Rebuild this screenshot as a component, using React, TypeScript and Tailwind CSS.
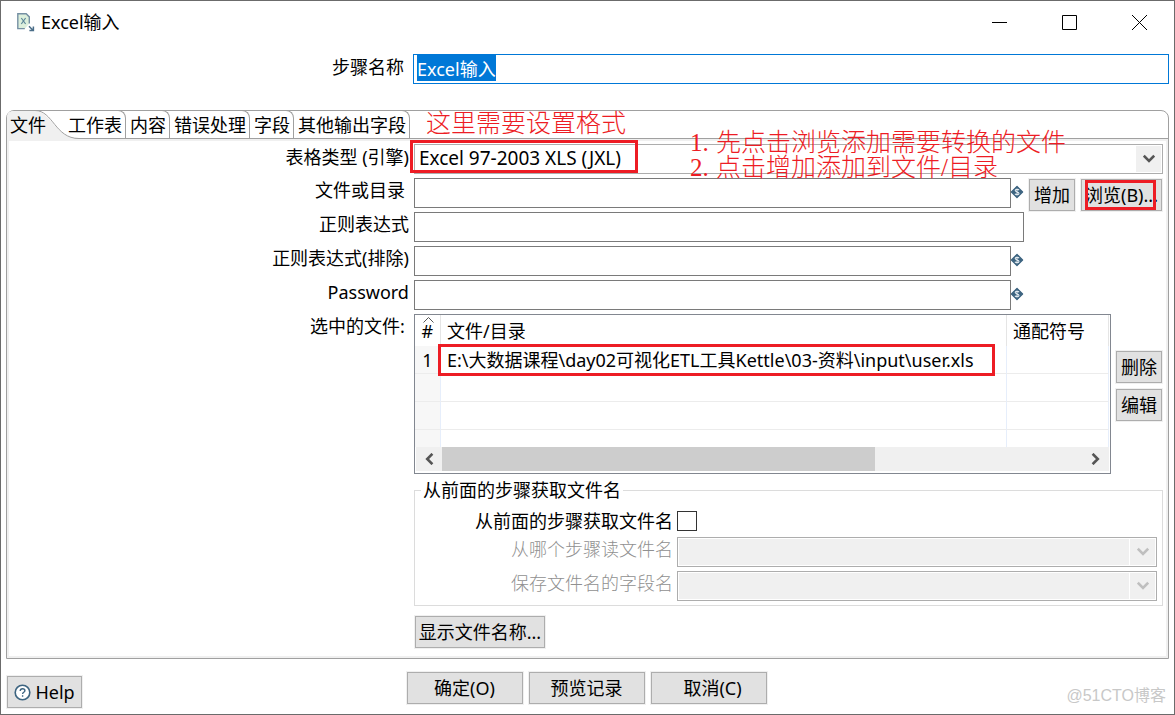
import React, { useEffect, useRef, useState } from 'react';

interface FormRowProps {
  id: string;
  label: string;
  labelClass?: string;
  children: React.ReactNode;
}

interface ButtonProps {
  className?: string;
  children: React.ReactNode;
}

const tabs = ['工作表', '内容', '错误处理', '字段', '其他输出字段'];

const files = [
  { path: 'E:\\大数据课程\\day02可视化ETL工具Kettle\\03-资料\\input\\user.xls', wildcard: '' },
];

function Button({ className = '', children }: ButtonProps) {
  return (
    <button className={`h-8 shrink-0 whitespace-nowrap border border-[#adadad] bg-[#e1e1e1] leading-6 ring-1 ring-[#f0f0f0] ${className}`}>
      {children}
    </button>
  );
}

function FormRow({ id, label, labelClass = 'pr-[5px]', children }: FormRowProps) {
  return (
    <div className="mb-1 flex items-start">
      <label htmlFor={id} className={`w-[35%] shrink-0 text-right ${labelClass}`}>{label}</label>
      {children}
    </div>
  );
}

function TextInput({ id }: { id: string }) {
  return <input id={id} type="text" className="h-[30px] min-w-0 flex-1 border border-[#7a7a7a] bg-white px-1 outline-none" />;
}

function Chevron({ color }: { color: string }) {
  return (
    <svg width="12" height="10" viewBox="0 0 12 10" fill="none" stroke={color} strokeWidth="2.6">
      <path d="M0.8 1.6 6 6.8 11.2 1.6" />
    </svg>
  );
}

function VariableIcon() {
  return (
    <svg width="13" height="14" viewBox="0 0 13 14" className="mt-[7px] shrink-0">
      <path d="M6 1.3 11.6 7 6 12.7 0.4 7Z" fill="#3d6480" stroke="#3d6480" strokeLinejoin="round" strokeWidth="1.2" />
      <path d="M8 5.2C7.5 4 4.2 3.9 4.2 5.6 4.2 7.3 8 6.6 8 8.4 8 10.1 4.6 10 4 8.7M6 3.4V10.6" fill="none" stroke="#e3ebf0" strokeWidth="1.1" />
    </svg>
  );
}

function DisabledSelect({ id, label }: { id: string; label: string }) {
  return (
    <div className="mb-1 flex items-start">
      <label htmlFor={id} className="w-[262px] shrink-0 pr-1 text-right font-light text-[#909090]">{label}</label>
      <div className="relative flex flex-1">
        <select id={id} disabled className="h-[30px] w-full appearance-none border border-[#adadad] bg-[#f0f0f0] opacity-100 ring-1 ring-inset ring-white" />
        <span className="pointer-events-none absolute inset-y-0.5 right-0.5 flex w-[26px] items-center justify-center border-l border-white">
          <Chevron color="#bfbfbf" />
        </span>
      </div>
    </div>
  );
}

export default function App() {
  const [fromStep, setFromStep] = useState(false);
  const nameRef = useRef<HTMLInputElement>(null);

  useEffect(() => {
    nameRef.current?.focus();
    nameRef.current?.select();
  }, []);

  return (
    <div className="relative min-h-screen border border-[#6b6b6b] bg-white font-['Noto_Sans','Noto_Sans_CJK_SC',sans-serif] text-[18px] leading-6 text-black">
      {/* title bar */}
      <header className="flex h-[43px] items-center">
        <svg width="18" height="19" viewBox="0 0 18 19" className="ml-4 mr-1.5" fill="none">
          <path d="M0.8 0.8H9.5L12.3 3.6V10.5L8 15.6H0.8Z" fill="#dcefdc" />
          <path d="M7.8 15.6H0.8V0.8H9.2L12.3 3.9V10.5" stroke="#7590a3" strokeWidth="1.4" />
          <path d="M4.3 5 8.6 11M8.6 5 4.3 11" stroke="#5c8799" strokeWidth="1.2" />
          <path d="M12 13.2 16 17.2M16.4 13.6V17.6H12.4" stroke="#4a6d88" strokeWidth="1.5" />
        </svg>
        <h1 className="flex-1 pb-0.5">Excel输入</h1>
        <button aria-label="最小化" className="flex h-full w-[70px] items-center justify-center">
          <svg width="15" height="15" stroke="#000"><path d="M0 7.5H15" /></svg>
        </button>
        <button aria-label="最大化" className="flex h-full w-[70px] items-center justify-center">
          <svg width="15" height="15" stroke="#000" fill="none"><path d="M0.5 0.5H14.5V14.5H0.5Z" /></svg>
        </button>
        <button aria-label="关闭" className="flex h-full w-[70px] items-center justify-center">
          <svg width="15" height="15" stroke="#000"><path d="M0 0 15 15M15 0 0 15" /></svg>
        </button>
      </header>

      <div className="mt-2.5 flex items-start px-[5px]">
        <label htmlFor="step-name" className="w-[35%] pr-[9px] pt-px text-right">步骤名称</label>
        <input
          id="step-name"
          ref={nameRef}
          type="text"
          defaultValue="Excel输入"
          className="h-[30px] min-w-0 flex-1 border border-[#0078d7] px-[3px] pb-0.5 leading-6 outline-none selection:bg-[#0078d7] selection:text-white"
        />
      </div>

      <main className="mx-[5px] mt-[26px] rounded-t-lg border border-[#a0a0a0]">
        {/* tab strip */}
        <div role="tablist" className="relative flex h-7 border-b border-[#a0a0a0]">
          <button role="tab" aria-selected="true" className="relative w-[57px] pl-[3px] text-left">
            <svg width="72" height="28" viewBox="0 0 72 28" className="absolute left-0 top-0" fill="none">
              <path d="M0 28V6Q0 0 6 0H28C44 0 48 27.5 72 27.5V28Z" fill="#f0f0f0" />
              <path d="M28 -0.5C46 -0.5 48 27.5 72 27.5" stroke="#a0a0a0" />
            </svg>
            <span className="relative">文件</span>
          </button>
          {tabs.map(tab => (
            <button key={tab} role="tab" aria-selected="false" className="relative -mt-px whitespace-nowrap rounded-tr-lg border-r border-t border-[#a0a0a0] pl-1 pr-[3px]">
              {tab}
            </button>
          ))}
          <p className="pointer-events-none ml-4 whitespace-nowrap pt-px font-['Liberation_Serif','Noto_Sans_CJK_SC',serif] text-[25px] font-light text-[#ed1c24]">
            这里需要设置格式
          </p>
        </div>

        <div className="border-2 border-[#f0f0f0] pb-2 pt-[3px]">
          <FormRow id="engine" label="表格类型 (引擎)" labelClass="pr-[5px] pt-px">
            <div className="relative mr-[3px] flex flex-1">
              <select id="engine" className="h-[30px] w-full appearance-none border border-[#adadad] bg-white pb-0.5 pl-1 text-[19px] outline-none">
                <option>Excel 97-2003 XLS (JXL)</option>
              </select>
              <span className="pointer-events-none absolute inset-y-0.5 right-0.5 flex w-[25px] items-center justify-center bg-[#f0f0f0]">
                <Chevron color="#555" />
              </span>
              <span className="pointer-events-none absolute -left-1 -top-1 h-[33px] w-[228px] border-[3px] border-[#ed1c24]" />
              <ol className="pointer-events-none absolute -top-3.5 left-[276px] whitespace-nowrap font-['Liberation_Serif','Noto_Sans_CJK_SC',serif] text-[25px] font-light leading-[25px] text-[#ed1c24]">
                <li className="flex"><span className="w-[26px]">1.</span>先点击浏览添加需要转换的文件</li>
                <li className="flex"><span className="w-[26px]">2.</span>点击增加添加到文件/目录</li>
              </ol>
            </div>
          </FormRow>

          <FormRow id="file" label="文件或目录" labelClass="pr-[9px]">
            <div className="mr-1 flex h-[30px] flex-1 items-start">
              <TextInput id="file" />
              <VariableIcon />
              <div className="ml-[5px] mt-px flex gap-1.5">
                <Button className="px-1">增加</Button>
                <div className="relative">
                  <Button className="w-[81px] overflow-hidden">浏览(B)...</Button>
                  <span className="pointer-events-none absolute left-1 top-px h-[30px] w-[71px] border-[3px] border-[#ed1c24]" />
                </div>
              </div>
            </div>
          </FormRow>

          <FormRow id="regex" label="正则表达式">
            <div className="mr-[142px] flex flex-1">
              <TextInput id="regex" />
            </div>
          </FormRow>

          <FormRow id="exclude" label="正则表达式(排除)">
            <div className="mr-[142px] flex flex-1">
              <TextInput id="exclude" />
              <VariableIcon />
            </div>
          </FormRow>

          <FormRow id="password" label="Password">
            <div className="mr-[142px] flex flex-1">
              <TextInput id="password" />
              <VariableIcon />
            </div>
          </FormRow>

          <FormRow id="files" label="选中的文件:" labelClass="pr-[9px]">
            <div className="mr-1 flex flex-1 gap-[5px]">
              <div className="flex-1 border border-[#828790] pb-0.5 pr-px">
                <table id="files" className="w-full table-fixed border-separate border-spacing-0 text-left">
                  <thead>
                    <tr className="h-[31px]">
                      <th className="relative w-[26px] border-r border-[#e5e5e5] text-center font-normal">
                        <svg width="11" height="6" viewBox="0 0 11 6" className="absolute left-2 top-0.5" fill="none" stroke="#555">
                          <path d="M0.5 5.5 5.5 0.5 10.5 5.5" />
                        </svg>
                        #
                      </th>
                      <th className="border-r border-[#e5e5e5] pl-1.5 font-normal">文件/目录</th>
                      <th className="w-[102px] border-r border-[#e5e5e5] pl-1.5 font-normal">通配符号</th>
                    </tr>
                  </thead>
                  <tbody>
                    {files.map((file, i) => (
                      <tr key={file.path} className="h-7">
                        <td className="border-b border-r border-[#ececec] bg-[#f7f7f7] text-center">{i + 1}</td>
                        <td className="relative whitespace-nowrap border-b border-r border-b-[#ececec] border-r-[#e6eefb] pl-1.5">
                          {file.path}
                          <span className="pointer-events-none absolute -left-[3px] -top-0.5 h-8 w-[557px] border-[3px] border-[#ed1c24]" />
                        </td>
                        <td className="border-b border-r border-b-[#ececec] border-r-[#e6eefb]">{file.wildcard}</td>
                      </tr>
                    ))}
                    {[0, 1].map(n => (
                      <tr key={n} className="h-7">
                        <td className="border-b border-r border-b-[#ececec] border-r-[#e6eefb] bg-[#f7f7f7]" />
                        <td className="border-b border-r border-b-[#ececec] border-r-[#e6eefb]" />
                        <td className="border-b border-r border-b-[#ececec] border-r-[#e6eefb]" />
                      </tr>
                    ))}
                    <tr className="h-[17px]">
                      <td className="border-r border-[#e6eefb] bg-[#f7f7f7]" />
                      <td className="border-r border-[#e6eefb]" />
                      <td className="border-r border-[#e6eefb]" />
                    </tr>
                  </tbody>
                </table>
                {/* horizontal scrollbar */}
                <div className="ml-px flex h-6 items-center bg-[#f0f0f0]">
                  <button aria-label="向左滚动" className="flex h-full w-[26px] items-center justify-center">
                    <span className="rotate-90"><Chevron color="#555" /></span>
                  </button>
                  <div className="h-full flex-1">
                    <div className="h-full w-[67.5%] bg-[#cdcdcd]" />
                  </div>
                  <button aria-label="向右滚动" className="flex h-full w-[26px] items-center justify-center">
                    <span className="-rotate-90"><Chevron color="#555" /></span>
                  </button>
                </div>
              </div>
              <div className="mt-[37px] flex flex-col gap-1.5">
                <Button className="px-1">删除</Button>
                <Button className="px-1">编辑</Button>
              </div>
            </div>
          </FormRow>

          <div className="ml-[35%] mr-[3px]">
            <fieldset className="border border-[#dcdcdc]">
              <legend className="ml-1.5 px-0.5">从前面的步骤获取文件名</legend>
              <div className="mb-[5px] mt-2 flex h-[22px] items-center">
                <label htmlFor="from-step" className="w-[262px] pr-1 text-right">从前面的步骤获取文件名</label>
                <input
                  id="from-step"
                  type="checkbox"
                  checked={fromStep}
                  onChange={e => setFromStep(e.target.checked)}
                  className="size-5 appearance-none border border-[#333] bg-white checked:bg-[#0078d7]"
                />
              </div>
              <div className="pr-[5px]">
                <DisabledSelect id="source-step" label="从哪个步骤读文件名" />
                <DisabledSelect id="name-field" label="保存文件名的字段名" />
              </div>
            </fieldset>
            <Button className="ml-px mt-2.5 w-[130px]">显示文件名称...</Button>
          </div>
        </div>
      </main>

      <footer className="mt-[13px] grid grid-cols-[1fr_auto_1fr] items-start pb-1.5 pl-1.5 pr-2">
        <div className="pt-1">
          <Button className="flex w-[75px] items-center justify-center gap-1">
            <svg width="17" height="17" viewBox="0 0 17 17" fill="none" stroke="#3d6480">
              <circle cx="8.5" cy="8.5" r="7.3" strokeWidth="1.6" fill="#fff" />
              <path d="M6.2 7C6.2 3.9 10.9 4.2 10.9 6.7 10.9 8.3 8.6 8.3 8.6 10M8.6 11.2V12.7" strokeWidth="1.4" />
            </svg>
            Help
          </Button>
        </div>
        <div className="flex gap-1.5">
          <Button className="w-[116px]">确定(O)</Button>
          <Button className="w-[116px]">预览记录</Button>
          <Button className="w-[116px] pl-2">取消(C)</Button>
        </div>
        <p className="self-end text-right font-['Liberation_Sans','Noto_Sans_CJK_SC',sans-serif] text-base text-[#c8c8c8]">@51CTO博客</p>
      </footer>
    </div>
  );
}
